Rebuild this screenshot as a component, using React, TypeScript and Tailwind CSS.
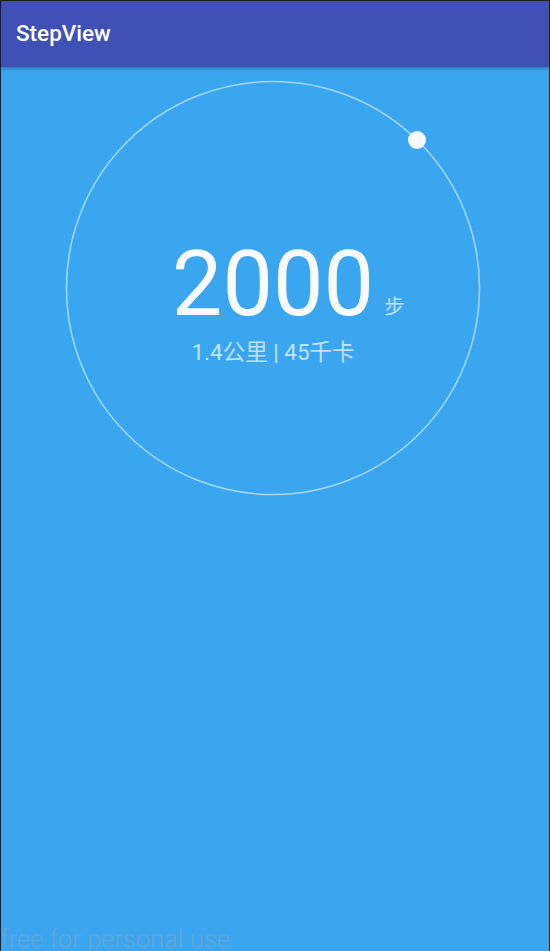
export default function App() {
  return (
    <div className="relative flex h-[951px] w-[550px] flex-col overflow-hidden border-l border-r border-t border-[#1c1c1c] bg-[#3aa6f0] font-['Roboto','Noto_Sans_CJK_SC',sans-serif]">
      <header className="z-10 flex h-[66px] shrink-0 items-center bg-[#3f51b5] pl-[15px] shadow-[0_2px_3px_rgba(0,0,0,0.25)]">
        <h1 className="text-[22.5px] font-medium text-white">StepView</h1>
      </header>

      <main className="flex-1 pl-[63px] pt-[12px]">
        <div className="relative flex h-[418px] w-[418px] flex-col items-center">
          <svg className="absolute inset-0" width="418" height="418" viewBox="0 0 418 418">
            <circle cx="209" cy="209" r="206.5" fill="none" stroke="rgba(255,255,255,0.55)" strokeWidth="1.5" />
            <circle cx="353" cy="61" r="9" fill="#f7f9fe" />
          </svg>

          <div className="relative mt-[161px] text-[90px] font-normal leading-none text-[#f8fafe]">
            2000
            <span className="absolute bottom-[13px] left-full ml-[10px] whitespace-nowrap text-[20px] font-normal leading-none text-white/70">
              步
            </span>
          </div>
          <p className="relative mt-[11px] text-[22.5px] leading-none text-white/70">1.4公里 | 45千卡</p>
        </div>
      </main>

      <span className="absolute bottom-[-1px] left-[-1px] text-[25.5px] font-light leading-none text-[#66a4d8]">
        free for personal use
      </span>
    </div>
  );
}
